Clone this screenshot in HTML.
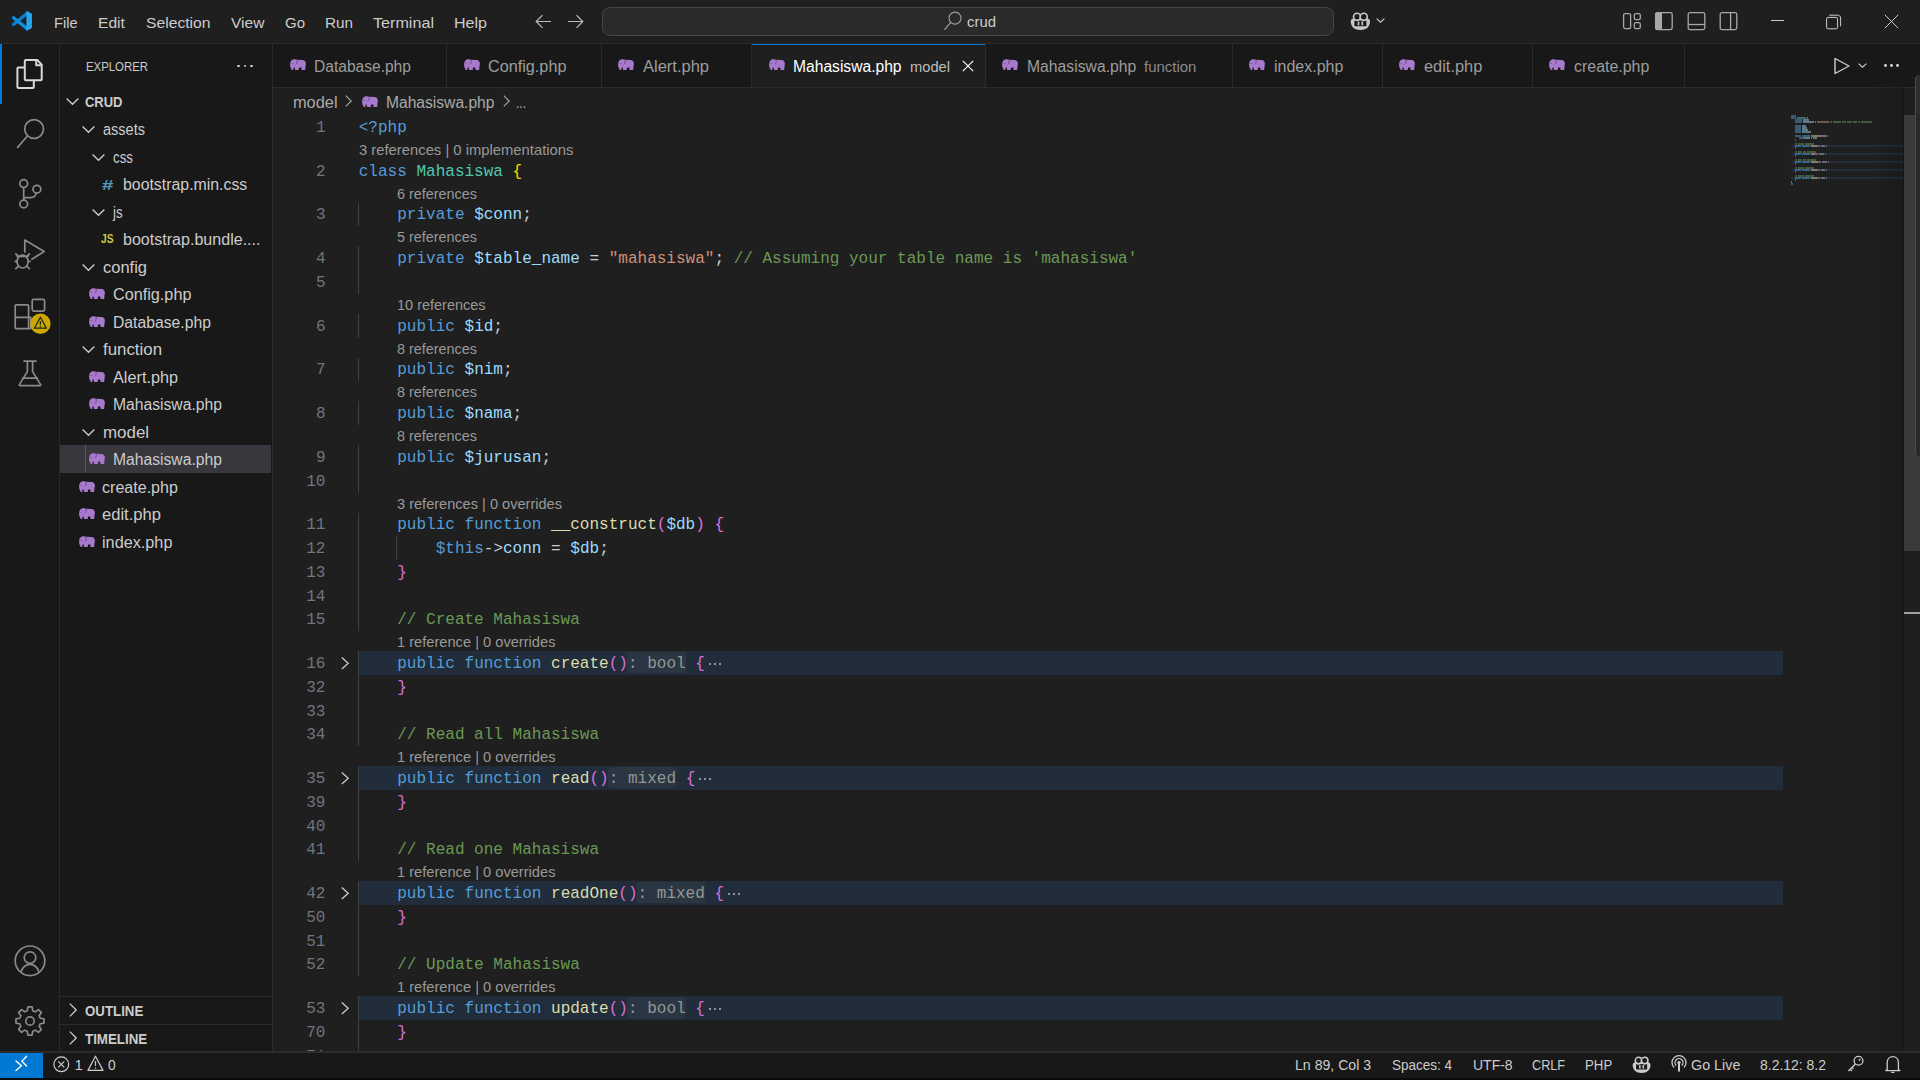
<!DOCTYPE html>
<html><head><meta charset="utf-8"><style>
html,body{margin:0;padding:0;width:1920px;height:1080px;overflow:hidden;background:#1f1f1f}
body{position:relative;font-family:"Liberation Sans",sans-serif}
.t{position:absolute;white-space:pre;font-family:"Liberation Sans",sans-serif}
.m{position:absolute;white-space:pre;font-family:"Liberation Mono",monospace;font-size:16.03px;line-height:23.75px;letter-spacing:0}
svg{overflow:visible}
</style></head><body>
<div style="position:absolute;left:0px;top:0px;width:1920px;height:43px;background:#1f1f1f;"></div>
<div style="position:absolute;left:0px;top:43px;width:1920px;height:1px;background:#2b2b2b;"></div>
<div style="position:absolute;left:0px;top:44px;width:59px;height:1007px;background:#181818;"></div>
<div style="position:absolute;left:59px;top:44px;width:1px;height:1007px;background:#2b2b2b;"></div>
<div style="position:absolute;left:60px;top:44px;width:212px;height:1007px;background:#181818;"></div>
<div style="position:absolute;left:272px;top:44px;width:1px;height:1007px;background:#2b2b2b;"></div>
<div style="position:absolute;left:273px;top:44px;width:1647px;height:43px;background:#181818;"></div>
<div style="position:absolute;left:273px;top:87px;width:1647px;height:964px;background:#1f1f1f;"></div>
<div style="position:absolute;left:273px;top:86.5px;width:1647px;height:1.25px;background:#2b2b2b;"></div>
<div style="position:absolute;left:0px;top:1051px;width:1920px;height:1px;background:#2b2b2b;"></div>
<div style="position:absolute;left:0px;top:1052px;width:1920px;height:28px;background:#181818;"></div>
<svg style="position:absolute;left:0;top:0" width="40" height="40" viewBox="0 0 40 40"><path d="M27.2 13.2 L13.5 24.5" stroke="#0a7fd2" stroke-width="3.3" stroke-linecap="round"/><path d="M27.2 28.6 L13.5 17.7" stroke="#0d8de0" stroke-width="3.3" stroke-linecap="round"/><path d="M26.4 10.8 L31.9 13.8 L31.9 27.9 L26.4 31.1 Z" fill="#27a6ee"/></svg>
<div class="t" style="left:54.00px;top:13.05px;font-size:15.5px;line-height:20.15px;color:#cccccc;transform:scaleX(0.9417);transform-origin:0 0;">File</div>
<div class="t" style="left:98.00px;top:13.05px;font-size:15.5px;line-height:20.15px;color:#cccccc;transform:scaleX(1.0069);transform-origin:0 0;">Edit</div>
<div class="t" style="left:145.50px;top:13.05px;font-size:15.5px;line-height:20.15px;color:#cccccc;transform:scaleX(1.0125);transform-origin:0 0;">Selection</div>
<div class="t" style="left:230.50px;top:13.05px;font-size:15.5px;line-height:20.15px;color:#cccccc;transform:scaleX(1.0006);transform-origin:0 0;">View</div>
<div class="t" style="left:285.00px;top:13.05px;font-size:15.5px;line-height:20.15px;color:#cccccc;transform:scaleX(0.9702);transform-origin:0 0;">Go</div>
<div class="t" style="left:325.00px;top:13.05px;font-size:15.5px;line-height:20.15px;color:#cccccc;transform:scaleX(0.9871);transform-origin:0 0;">Run</div>
<div class="t" style="left:373.00px;top:13.05px;font-size:15.5px;line-height:20.15px;color:#cccccc;transform:scaleX(1.0411);transform-origin:0 0;">Terminal</div>
<div class="t" style="left:454.00px;top:13.05px;font-size:15.5px;line-height:20.15px;color:#cccccc;transform:scaleX(1.0335);transform-origin:0 0;">Help</div>
<svg style="position:absolute;left:535px;top:14px" width="17" height="15" viewBox="0 0 17 15"><path d="M16 7.5 H1.2 M7.5 1.2 L1.2 7.5 L7.5 13.8" stroke="#bbbbbb" stroke-width="1.2" fill="none"/></svg>
<svg style="position:absolute;left:567px;top:14px" width="17" height="15" viewBox="0 0 17 15"><path d="M1 7.5 H15.8 M9.5 1.2 L15.8 7.5 L9.5 13.8" stroke="#bbbbbb" stroke-width="1.2" fill="none"/></svg>
<div style="position:absolute;left:602px;top:7px;width:730px;height:27px;border:1px solid #454545;border-radius:8px;background:#2a2a2a"></div>
<svg style="position:absolute;left:943px;top:12px" width="18" height="18" viewBox="0 0 18 18"><circle cx="12" cy="6.1" r="6" stroke="#a0a0a0" stroke-width="1.1" fill="none"/><path d="M7.8 10.4 L1.8 17.4" stroke="#a0a0a0" stroke-width="1.2" stroke-linecap="round"/></svg>
<div class="t" style="left:967.00px;top:12.05px;font-size:15.5px;line-height:20.15px;color:#cccccc;transform:scaleX(0.9595);transform-origin:0 0;">crud</div>
<svg style="position:absolute;left:0;top:0;overflow:visible" width="1" height="1"><g transform="translate(1350,12) scale(1.04)"><path d="M0.8 10.2 C0.3 7.6 1.8 6.2 3.6 6.2 H16.4 C18.2 6.2 19.7 7.6 19.2 10.2 C18.7 14.4 15.8 17.4 10 17.4 C4.2 17.4 1.3 14.4 0.8 10.2 Z" fill="#c8c8c8"/><rect x="4.2" y="8.2" width="11.6" height="5.6" rx="0.6" fill="#1c1c1c"/><rect x="7.4" y="9.2" width="1.6" height="3.6" fill="#c8c8c8"/><rect x="11" y="9.2" width="1.6" height="3.6" fill="#c8c8c8"/><circle cx="6.8" cy="4.6" r="3.4" fill="#1c1c1c" stroke="#c8c8c8" stroke-width="1.6"/><circle cx="13.2" cy="4.6" r="3.4" fill="#1c1c1c" stroke="#c8c8c8" stroke-width="1.6"/></g></svg>
<svg style="position:absolute;left:1376px;top:18px" width="9" height="5" viewBox="0 0 9 5"><path d="M0.6 0.6 L4.5 4.2 L8.4 0.6" stroke="#cccccc" stroke-width="1.1" fill="none"/></svg>
<svg style="position:absolute;left:1622px;top:12px" width="20" height="18" viewBox="0 0 20 18"><g fill="none" stroke="#a8a8a8" stroke-width="1.3"><rect x="1.6" y="1.6" width="7" height="15" rx="1.6"/><rect x="12.3" y="1.6" width="6" height="6" rx="1.6"/><rect x="12.3" y="10.6" width="6" height="6" rx="1.6"/></g></svg>
<svg style="position:absolute;left:1654px;top:11px" width="20" height="20" viewBox="0 0 20 20"><rect x="1.6" y="1.6" width="16.6" height="17" rx="1.8" fill="none" stroke="#a8a8a8" stroke-width="1.3"/><rect x="1.6" y="1.6" width="6.4" height="17" fill="#a8a8a8"/></svg>
<svg style="position:absolute;left:1687px;top:11px" width="20" height="20" viewBox="0 0 20 20"><rect x="1.2" y="1.6" width="16.6" height="17" rx="1.8" fill="none" stroke="#a8a8a8" stroke-width="1.3"/><path d="M1.2 13.5 H17.8" stroke="#a8a8a8" stroke-width="1.3"/></svg>
<svg style="position:absolute;left:1719px;top:11px" width="20" height="20" viewBox="0 0 20 20"><rect x="1.2" y="1.6" width="16.6" height="17" rx="1.8" fill="none" stroke="#a8a8a8" stroke-width="1.3"/><path d="M11.6 1.6 V18.6" stroke="#a8a8a8" stroke-width="1.3"/></svg>
<div style="position:absolute;left:1771px;top:20px;width:13px;height:1px;background:#cccccc;"></div>
<svg style="position:absolute;left:1826px;top:14px" width="16" height="16" viewBox="0 0 16 16"><rect x="0.6" y="3.4" width="11" height="11.4" rx="1.5" fill="none" stroke="#cccccc" stroke-width="1"/><path d="M3.2 1.2 H11.8 C13.4 1.2 14.6 2.4 14.6 4 V12.4" fill="none" stroke="#cccccc" stroke-width="1"/></svg>
<svg style="position:absolute;left:1884px;top:14px" width="15" height="15" viewBox="0 0 15 15"><path d="M0.8 0.8 L14.2 14.2 M14.2 0.8 L0.8 14.2" stroke="#cccccc" stroke-width="1"/></svg>
<div style="position:absolute;left:0px;top:44px;width:2px;height:60px;background:#0078d4;"></div>
<svg style="position:absolute;left:0;top:0" width="60" height="1080" viewBox="0 0 60 1080"><g fill="none" stroke="#d7d7d7" stroke-width="2" stroke-linejoin="round"><path d="M24.8 67.6 H18.4 Q17.4 67.6 17.4 68.6 V87 Q17.4 88 18.4 88 H32.8 Q33.8 88 33.8 87 V80.8"/><path d="M25.8 60 H37.3 L41.7 64.6 V79.3 Q41.7 80.3 40.7 80.3 H25.8 Q24.8 80.3 24.8 79.3 V61 Q24.8 60 25.8 60 Z"/><path d="M36.2 60.5 V65.2 H41.2"/></g><g fill="none" stroke="#8a8a8a" stroke-width="1.7" stroke-linejoin="round" stroke-linecap="round"><circle cx="34.1" cy="129" r="9.4"/><path d="M27.2 136.2 L17.6 147.4"/><circle cx="23.7" cy="183.6" r="3.9"/><circle cx="23.7" cy="204" r="3.9"/><circle cx="36.9" cy="189.2" r="3.9"/><path d="M23.7 187.5 V200.1"/><path d="M23.7 197.6 H30.5 C33.5 197.6 35.6 195.8 36.2 193.1"/><path d="M24.8 252 V240 L44.2 251.5 L31.8 259.2"/><ellipse cx="22.6" cy="261.6" rx="5.6" ry="6.4"/><path d="M17.2 256.5 H28 M15.8 254 L18 256 M29.4 254 L27.2 256 M15.2 261.4 H17 M28.2 261.4 H30 M15.8 268.6 L18 266.6 M29.4 268.6 L27.2 266.6"/><path d="M16.2 317.4 H30.8 V328.6 H16.2 Q15.2 328.6 15.2 327.6 V305.8 Q15.2 304.8 16.2 304.8 H27.6 Q28.6 304.8 28.6 305.8 V328.6"/><rect x="32.2" y="299.3" width="12.4" height="11.9" rx="1.6"/><path d="M24 361.2 H36 M27.4 361.4 V371.6 L19.4 384.6 Q19 385.6 20 385.6 H40 Q41 385.6 40.6 384.6 L32.6 371.6 V361.4 M22.6 378.2 H37.4"/><circle cx="30" cy="960.8" r="14.8"/><circle cx="30" cy="957.6" r="5.8"/><path d="M21.2 971.6 C22.8 966.8 26 964.4 30 964.4 C34 964.4 37.2 966.8 38.8 971.6"/><path d="M27.27 1010.76 L27.88 1006.96 L32.12 1006.96 L32.73 1010.76 L35.32 1011.83 L38.43 1009.57 L41.43 1012.57 L39.17 1015.68 L40.24 1018.27 L44.04 1018.88 L44.04 1023.12 L40.24 1023.73 L39.17 1026.32 L41.43 1029.43 L38.43 1032.43 L35.32 1030.17 L32.73 1031.24 L32.12 1035.04 L27.88 1035.04 L27.27 1031.24 L24.68 1030.17 L21.57 1032.43 L18.57 1029.43 L20.83 1026.32 L19.76 1023.73 L15.96 1023.12 L15.96 1018.88 L19.76 1018.27 L20.83 1015.68 L18.57 1012.57 L21.57 1009.57 L24.68 1011.83Z"/><circle cx="30" cy="1021" r="4.2"/></g><circle cx="40.4" cy="323.8" r="10.2" fill="#cca700"/><path d="M40.4 317.2 L46.4 328.2 H34.4 Z" fill="none" stroke="#1d2a12" stroke-width="1.3" stroke-linejoin="round"/><path d="M40.4 321.2 V324.8" stroke="#1d2a12" stroke-width="1.3"/><circle cx="40.4" cy="326.6" r="0.75" fill="#1d2a12"/></svg>
<div class="t" style="left:85.50px;top:58.04px;font-size:13.5px;line-height:17.55px;color:#cccccc;transform:scaleX(0.8427);transform-origin:0 0;">EXPLORER</div>
<div style="position:absolute;left:237.0px;top:64.5px;width:2.6px;height:2.6px;background:#cccccc;border-radius:50%;"></div>
<div style="position:absolute;left:243.5px;top:64.5px;width:2.6px;height:2.6px;background:#cccccc;border-radius:50%;"></div>
<div style="position:absolute;left:250.0px;top:64.5px;width:2.6px;height:2.6px;background:#cccccc;border-radius:50%;"></div>
<svg style="position:absolute;left:66px;top:98px" width="13" height="7" viewBox="0 0 13 7"><path d="M0.6 0.6 L6.5 6.2 L12.4 0.6" stroke="#cccccc" stroke-width="1.4" fill="none"/></svg>
<div class="t" style="left:85.00px;top:93.05px;font-size:14px;line-height:18.2px;color:#cccccc;font-weight:bold;transform:scaleX(0.9268);transform-origin:0 0;">CRUD</div>
<svg style="position:absolute;left:82px;top:126.0px" width="13" height="7" viewBox="0 0 13 7"><path d="M0.6 0.6 L6.5 6.2 L12.4 0.6" stroke="#cccccc" stroke-width="1.4" fill="none"/></svg>
<div class="t" style="left:103.00px;top:120.05px;font-size:15.6px;line-height:20.28px;color:#cccccc;transform:scaleX(0.9316);transform-origin:0 0;">assets</div>
<svg style="position:absolute;left:92px;top:153.5px" width="13" height="7" viewBox="0 0 13 7"><path d="M0.6 0.6 L6.5 6.2 L12.4 0.6" stroke="#cccccc" stroke-width="1.4" fill="none"/></svg>
<div class="t" style="left:112.80px;top:147.55px;font-size:15.6px;line-height:20.28px;color:#cccccc;transform:scaleX(0.8547);transform-origin:0 0;">css</div>
<div class="t" style="left:101.50px;top:174.65px;font-size:15px;line-height:19.5px;color:#519aba;font-weight:bold;transform:scaleX(1.3690);transform-origin:0 0;">#</div>
<div class="t" style="left:123.00px;top:175.05px;font-size:15.6px;line-height:20.28px;color:#cccccc;transform:scaleX(1.0171);transform-origin:0 0;">bootstrap.min.css</div>
<svg style="position:absolute;left:92px;top:208.5px" width="13" height="7" viewBox="0 0 13 7"><path d="M0.6 0.6 L6.5 6.2 L12.4 0.6" stroke="#cccccc" stroke-width="1.4" fill="none"/></svg>
<div class="t" style="left:113.20px;top:202.55px;font-size:15.6px;line-height:20.28px;color:#cccccc;transform:scaleX(0.8547);transform-origin:0 0;">js</div>
<div class="t" style="left:101.00px;top:231.64px;font-size:12px;line-height:15.6px;color:#cbcb41;font-weight:bold;transform:scaleX(0.8538);transform-origin:0 0;">JS</div>
<div class="t" style="left:123.00px;top:230.05px;font-size:15.6px;line-height:20.28px;color:#cccccc;transform:scaleX(1.0297);transform-origin:0 0;">bootstrap.bundle....</div>
<svg style="position:absolute;left:82px;top:263.5px" width="13" height="7" viewBox="0 0 13 7"><path d="M0.6 0.6 L6.5 6.2 L12.4 0.6" stroke="#cccccc" stroke-width="1.4" fill="none"/></svg>
<div class="t" style="left:103.00px;top:257.55px;font-size:15.6px;line-height:20.28px;color:#cccccc;transform:scaleX(1.0564);transform-origin:0 0;">config</div>
<svg style="position:absolute;left:89.0px;top:288.0px" width="16" height="11" viewBox="0 0 16 11"><path fill="#a87acd" d="M1.8 10.9 L0.5 8.4 C-0.1 6.8 0 3.4 1 2 C1.8 0.6 3.5 0 5 0.2 L7 0.8 L12.5 0.9 C14.7 1 16 2.8 15.9 5 L15.4 8 L15.2 11 L11.6 11 L11.3 8.6 L9 8.6 L8.7 11 L5.1 11 L4.7 8.7 L3.9 8.2 C3.3 9 3.2 10 3.5 10.9 Z"/><path d="M7.1 1 C7.4 2.5 7.4 4.2 5.8 5.4" stroke="#5a3f78" stroke-width="0.8" fill="none"/><circle cx="2.2" cy="4.2" r="0.55" fill="#5a3f78"/></svg>
<div class="t" style="left:112.50px;top:285.05px;font-size:15.6px;line-height:20.28px;color:#cccccc;transform:scaleX(1.0397);transform-origin:0 0;">Config.php</div>
<svg style="position:absolute;left:89.0px;top:315.5px" width="16" height="11" viewBox="0 0 16 11"><path fill="#a87acd" d="M1.8 10.9 L0.5 8.4 C-0.1 6.8 0 3.4 1 2 C1.8 0.6 3.5 0 5 0.2 L7 0.8 L12.5 0.9 C14.7 1 16 2.8 15.9 5 L15.4 8 L15.2 11 L11.6 11 L11.3 8.6 L9 8.6 L8.7 11 L5.1 11 L4.7 8.7 L3.9 8.2 C3.3 9 3.2 10 3.5 10.9 Z"/><path d="M7.1 1 C7.4 2.5 7.4 4.2 5.8 5.4" stroke="#5a3f78" stroke-width="0.8" fill="none"/><circle cx="2.2" cy="4.2" r="0.55" fill="#5a3f78"/></svg>
<div class="t" style="left:112.50px;top:312.55px;font-size:15.6px;line-height:20.28px;color:#cccccc;transform:scaleX(1.0084);transform-origin:0 0;">Database.php</div>
<svg style="position:absolute;left:82px;top:346.0px" width="13" height="7" viewBox="0 0 13 7"><path d="M0.6 0.6 L6.5 6.2 L12.4 0.6" stroke="#cccccc" stroke-width="1.4" fill="none"/></svg>
<div class="t" style="left:103.00px;top:340.05px;font-size:15.6px;line-height:20.28px;color:#cccccc;transform:scaleX(1.0806);transform-origin:0 0;">function</div>
<svg style="position:absolute;left:89.0px;top:370.5px" width="16" height="11" viewBox="0 0 16 11"><path fill="#a87acd" d="M1.8 10.9 L0.5 8.4 C-0.1 6.8 0 3.4 1 2 C1.8 0.6 3.5 0 5 0.2 L7 0.8 L12.5 0.9 C14.7 1 16 2.8 15.9 5 L15.4 8 L15.2 11 L11.6 11 L11.3 8.6 L9 8.6 L8.7 11 L5.1 11 L4.7 8.7 L3.9 8.2 C3.3 9 3.2 10 3.5 10.9 Z"/><path d="M7.1 1 C7.4 2.5 7.4 4.2 5.8 5.4" stroke="#5a3f78" stroke-width="0.8" fill="none"/><circle cx="2.2" cy="4.2" r="0.55" fill="#5a3f78"/></svg>
<div class="t" style="left:112.50px;top:367.55px;font-size:15.6px;line-height:20.28px;color:#cccccc;transform:scaleX(1.0417);transform-origin:0 0;">Alert.php</div>
<svg style="position:absolute;left:89.0px;top:398.0px" width="16" height="11" viewBox="0 0 16 11"><path fill="#a87acd" d="M1.8 10.9 L0.5 8.4 C-0.1 6.8 0 3.4 1 2 C1.8 0.6 3.5 0 5 0.2 L7 0.8 L12.5 0.9 C14.7 1 16 2.8 15.9 5 L15.4 8 L15.2 11 L11.6 11 L11.3 8.6 L9 8.6 L8.7 11 L5.1 11 L4.7 8.7 L3.9 8.2 C3.3 9 3.2 10 3.5 10.9 Z"/><path d="M7.1 1 C7.4 2.5 7.4 4.2 5.8 5.4" stroke="#5a3f78" stroke-width="0.8" fill="none"/><circle cx="2.2" cy="4.2" r="0.55" fill="#5a3f78"/></svg>
<div class="t" style="left:112.50px;top:395.05px;font-size:15.6px;line-height:20.28px;color:#cccccc;transform:scaleX(1.0053);transform-origin:0 0;">Mahasiswa.php</div>
<svg style="position:absolute;left:82px;top:428.5px" width="13" height="7" viewBox="0 0 13 7"><path d="M0.6 0.6 L6.5 6.2 L12.4 0.6" stroke="#cccccc" stroke-width="1.4" fill="none"/></svg>
<div class="t" style="left:103.00px;top:422.55px;font-size:15.6px;line-height:20.28px;color:#cccccc;transform:scaleX(1.0841);transform-origin:0 0;">model</div>
<div style="position:absolute;left:60px;top:445.25px;width:211px;height:27.5px;background:#37373d;"></div>
<div style="position:absolute;left:85px;top:445.25px;width:1px;height:27.5px;background:#585858;"></div>
<svg style="position:absolute;left:89.0px;top:453.0px" width="16" height="11" viewBox="0 0 16 11"><path fill="#a87acd" d="M1.8 10.9 L0.5 8.4 C-0.1 6.8 0 3.4 1 2 C1.8 0.6 3.5 0 5 0.2 L7 0.8 L12.5 0.9 C14.7 1 16 2.8 15.9 5 L15.4 8 L15.2 11 L11.6 11 L11.3 8.6 L9 8.6 L8.7 11 L5.1 11 L4.7 8.7 L3.9 8.2 C3.3 9 3.2 10 3.5 10.9 Z"/><path d="M7.1 1 C7.4 2.5 7.4 4.2 5.8 5.4" stroke="#5a3f78" stroke-width="0.8" fill="none"/><circle cx="2.2" cy="4.2" r="0.55" fill="#5a3f78"/></svg>
<div class="t" style="left:112.50px;top:450.05px;font-size:15.6px;line-height:20.28px;color:#cccccc;transform:scaleX(1.0053);transform-origin:0 0;">Mahasiswa.php</div>
<svg style="position:absolute;left:78.9px;top:480.5px" width="16" height="11" viewBox="0 0 16 11"><path fill="#a87acd" d="M1.8 10.9 L0.5 8.4 C-0.1 6.8 0 3.4 1 2 C1.8 0.6 3.5 0 5 0.2 L7 0.8 L12.5 0.9 C14.7 1 16 2.8 15.9 5 L15.4 8 L15.2 11 L11.6 11 L11.3 8.6 L9 8.6 L8.7 11 L5.1 11 L4.7 8.7 L3.9 8.2 C3.3 9 3.2 10 3.5 10.9 Z"/><path d="M7.1 1 C7.4 2.5 7.4 4.2 5.8 5.4" stroke="#5a3f78" stroke-width="0.8" fill="none"/><circle cx="2.2" cy="4.2" r="0.55" fill="#5a3f78"/></svg>
<div class="t" style="left:102.40px;top:477.55px;font-size:15.6px;line-height:20.28px;color:#cccccc;transform:scaleX(1.0300);transform-origin:0 0;">create.php</div>
<svg style="position:absolute;left:78.9px;top:508.0px" width="16" height="11" viewBox="0 0 16 11"><path fill="#a87acd" d="M1.8 10.9 L0.5 8.4 C-0.1 6.8 0 3.4 1 2 C1.8 0.6 3.5 0 5 0.2 L7 0.8 L12.5 0.9 C14.7 1 16 2.8 15.9 5 L15.4 8 L15.2 11 L11.6 11 L11.3 8.6 L9 8.6 L8.7 11 L5.1 11 L4.7 8.7 L3.9 8.2 C3.3 9 3.2 10 3.5 10.9 Z"/><path d="M7.1 1 C7.4 2.5 7.4 4.2 5.8 5.4" stroke="#5a3f78" stroke-width="0.8" fill="none"/><circle cx="2.2" cy="4.2" r="0.55" fill="#5a3f78"/></svg>
<div class="t" style="left:102.40px;top:505.05px;font-size:15.6px;line-height:20.28px;color:#cccccc;transform:scaleX(1.0624);transform-origin:0 0;">edit.php</div>
<svg style="position:absolute;left:78.9px;top:535.5px" width="16" height="11" viewBox="0 0 16 11"><path fill="#a87acd" d="M1.8 10.9 L0.5 8.4 C-0.1 6.8 0 3.4 1 2 C1.8 0.6 3.5 0 5 0.2 L7 0.8 L12.5 0.9 C14.7 1 16 2.8 15.9 5 L15.4 8 L15.2 11 L11.6 11 L11.3 8.6 L9 8.6 L8.7 11 L5.1 11 L4.7 8.7 L3.9 8.2 C3.3 9 3.2 10 3.5 10.9 Z"/><path d="M7.1 1 C7.4 2.5 7.4 4.2 5.8 5.4" stroke="#5a3f78" stroke-width="0.8" fill="none"/><circle cx="2.2" cy="4.2" r="0.55" fill="#5a3f78"/></svg>
<div class="t" style="left:102.40px;top:532.55px;font-size:15.6px;line-height:20.28px;color:#cccccc;transform:scaleX(1.0413);transform-origin:0 0;">index.php</div>
<div style="position:absolute;left:60px;top:996px;width:212px;height:1px;background:#2b2b2b;"></div>
<div style="position:absolute;left:60px;top:1024px;width:212px;height:1px;background:#2b2b2b;"></div>
<svg style="position:absolute;left:69px;top:1003px" width="8" height="14" viewBox="0 0 8 14"><path d="M0.8 0.6 L7.2 7.0 L0.8 13.4" stroke="#cccccc" stroke-width="1.3" fill="none"/></svg>
<div class="t" style="left:85.00px;top:1002.15px;font-size:14px;line-height:18.2px;color:#cccccc;font-weight:bold;transform:scaleX(0.9486);transform-origin:0 0;">OUTLINE</div>
<svg style="position:absolute;left:69px;top:1031px" width="8" height="14" viewBox="0 0 8 14"><path d="M0.8 0.6 L7.2 7.0 L0.8 13.4" stroke="#cccccc" stroke-width="1.3" fill="none"/></svg>
<div class="t" style="left:85.00px;top:1029.85px;font-size:14px;line-height:18.2px;color:#cccccc;font-weight:bold;transform:scaleX(0.9529);transform-origin:0 0;">TIMELINE</div>
<div style="position:absolute;left:446.1px;top:44px;width:1px;height:42.5px;background:#2b2b2b;"></div>
<svg style="position:absolute;left:289.5px;top:59px" width="16" height="11" viewBox="0 0 16 11"><path fill="#a87acd" d="M1.8 10.9 L0.5 8.4 C-0.1 6.8 0 3.4 1 2 C1.8 0.6 3.5 0 5 0.2 L7 0.8 L12.5 0.9 C14.7 1 16 2.8 15.9 5 L15.4 8 L15.2 11 L11.6 11 L11.3 8.6 L9 8.6 L8.7 11 L5.1 11 L4.7 8.7 L3.9 8.2 C3.3 9 3.2 10 3.5 10.9 Z"/><path d="M7.1 1 C7.4 2.5 7.4 4.2 5.8 5.4" stroke="#5a3f78" stroke-width="0.8" fill="none"/><circle cx="2.2" cy="4.2" r="0.55" fill="#5a3f78"/></svg>
<div class="t" style="left:313.70px;top:56.75px;font-size:15.6px;line-height:20.28px;color:#9d9d9d;transform:scaleX(0.9981);transform-origin:0 0;">Database.php</div>
<div style="position:absolute;left:600.9px;top:44px;width:1px;height:42.5px;background:#2b2b2b;"></div>
<svg style="position:absolute;left:463.6px;top:59px" width="16" height="11" viewBox="0 0 16 11"><path fill="#a87acd" d="M1.8 10.9 L0.5 8.4 C-0.1 6.8 0 3.4 1 2 C1.8 0.6 3.5 0 5 0.2 L7 0.8 L12.5 0.9 C14.7 1 16 2.8 15.9 5 L15.4 8 L15.2 11 L11.6 11 L11.3 8.6 L9 8.6 L8.7 11 L5.1 11 L4.7 8.7 L3.9 8.2 C3.3 9 3.2 10 3.5 10.9 Z"/><path d="M7.1 1 C7.4 2.5 7.4 4.2 5.8 5.4" stroke="#5a3f78" stroke-width="0.8" fill="none"/><circle cx="2.2" cy="4.2" r="0.55" fill="#5a3f78"/></svg>
<div class="t" style="left:487.80px;top:56.75px;font-size:15.6px;line-height:20.28px;color:#9d9d9d;transform:scaleX(1.0397);transform-origin:0 0;">Config.php</div>
<div style="position:absolute;left:751.2px;top:44px;width:1px;height:42.5px;background:#2b2b2b;"></div>
<svg style="position:absolute;left:618.4px;top:59px" width="16" height="11" viewBox="0 0 16 11"><path fill="#a87acd" d="M1.8 10.9 L0.5 8.4 C-0.1 6.8 0 3.4 1 2 C1.8 0.6 3.5 0 5 0.2 L7 0.8 L12.5 0.9 C14.7 1 16 2.8 15.9 5 L15.4 8 L15.2 11 L11.6 11 L11.3 8.6 L9 8.6 L8.7 11 L5.1 11 L4.7 8.7 L3.9 8.2 C3.3 9 3.2 10 3.5 10.9 Z"/><path d="M7.1 1 C7.4 2.5 7.4 4.2 5.8 5.4" stroke="#5a3f78" stroke-width="0.8" fill="none"/><circle cx="2.2" cy="4.2" r="0.55" fill="#5a3f78"/></svg>
<div class="t" style="left:642.60px;top:56.75px;font-size:15.6px;line-height:20.28px;color:#9d9d9d;transform:scaleX(1.0577);transform-origin:0 0;">Alert.php</div>
<div style="position:absolute;left:752.2px;top:44px;width:233.0999999999999px;height:43px;background:#1f1f1f;"></div>
<div style="position:absolute;left:751.7px;top:44px;width:233.5999999999999px;height:1.25px;background:#0078d4;"></div>
<div style="position:absolute;left:984.8px;top:44px;width:1px;height:42.5px;background:#2b2b2b;"></div>
<svg style="position:absolute;left:768.7px;top:59px" width="16" height="11" viewBox="0 0 16 11"><path fill="#a87acd" d="M1.8 10.9 L0.5 8.4 C-0.1 6.8 0 3.4 1 2 C1.8 0.6 3.5 0 5 0.2 L7 0.8 L12.5 0.9 C14.7 1 16 2.8 15.9 5 L15.4 8 L15.2 11 L11.6 11 L11.3 8.6 L9 8.6 L8.7 11 L5.1 11 L4.7 8.7 L3.9 8.2 C3.3 9 3.2 10 3.5 10.9 Z"/><path d="M7.1 1 C7.4 2.5 7.4 4.2 5.8 5.4" stroke="#5a3f78" stroke-width="0.8" fill="none"/><circle cx="2.2" cy="4.2" r="0.55" fill="#5a3f78"/></svg>
<div class="t" style="left:792.90px;top:56.75px;font-size:15.6px;line-height:20.28px;color:#ffffff;transform:scaleX(1.0017);transform-origin:0 0;">Mahasiswa.php</div>
<div class="t" style="left:909.70px;top:58.15px;font-size:14.2px;line-height:18.46px;color:#bdbdbd;transform:scaleX(1.0356);transform-origin:0 0;">model</div>
<svg style="position:absolute;left:962px;top:60px" width="12" height="12" viewBox="0 0 12 12"><path d="M0.8 0.8 L11.2 11.2 M11.2 0.8 L0.8 11.2" stroke="#ffffff" stroke-width="1.2"/></svg>
<div style="position:absolute;left:1231.9px;top:44px;width:1px;height:42.5px;background:#2b2b2b;"></div>
<svg style="position:absolute;left:1002.3px;top:59px" width="16" height="11" viewBox="0 0 16 11"><path fill="#a87acd" d="M1.8 10.9 L0.5 8.4 C-0.1 6.8 0 3.4 1 2 C1.8 0.6 3.5 0 5 0.2 L7 0.8 L12.5 0.9 C14.7 1 16 2.8 15.9 5 L15.4 8 L15.2 11 L11.6 11 L11.3 8.6 L9 8.6 L8.7 11 L5.1 11 L4.7 8.7 L3.9 8.2 C3.3 9 3.2 10 3.5 10.9 Z"/><path d="M7.1 1 C7.4 2.5 7.4 4.2 5.8 5.4" stroke="#5a3f78" stroke-width="0.8" fill="none"/><circle cx="2.2" cy="4.2" r="0.55" fill="#5a3f78"/></svg>
<div class="t" style="left:1026.50px;top:56.75px;font-size:15.6px;line-height:20.28px;color:#9d9d9d;transform:scaleX(1.0081);transform-origin:0 0;">Mahasiswa.php</div>
<div class="t" style="left:1143.60px;top:58.15px;font-size:14.2px;line-height:18.46px;color:#8a8a8a;transform:scaleX(1.0543);transform-origin:0 0;">function</div>
<div style="position:absolute;left:1381.8px;top:44px;width:1px;height:42.5px;background:#2b2b2b;"></div>
<svg style="position:absolute;left:1249.4px;top:59px" width="16" height="11" viewBox="0 0 16 11"><path fill="#a87acd" d="M1.8 10.9 L0.5 8.4 C-0.1 6.8 0 3.4 1 2 C1.8 0.6 3.5 0 5 0.2 L7 0.8 L12.5 0.9 C14.7 1 16 2.8 15.9 5 L15.4 8 L15.2 11 L11.6 11 L11.3 8.6 L9 8.6 L8.7 11 L5.1 11 L4.7 8.7 L3.9 8.2 C3.3 9 3.2 10 3.5 10.9 Z"/><path d="M7.1 1 C7.4 2.5 7.4 4.2 5.8 5.4" stroke="#5a3f78" stroke-width="0.8" fill="none"/><circle cx="2.2" cy="4.2" r="0.55" fill="#5a3f78"/></svg>
<div class="t" style="left:1273.60px;top:56.75px;font-size:15.6px;line-height:20.28px;color:#9d9d9d;transform:scaleX(1.0265);transform-origin:0 0;">index.php</div>
<div style="position:absolute;left:1531.8px;top:44px;width:1px;height:42.5px;background:#2b2b2b;"></div>
<svg style="position:absolute;left:1399.3px;top:59px" width="16" height="11" viewBox="0 0 16 11"><path fill="#a87acd" d="M1.8 10.9 L0.5 8.4 C-0.1 6.8 0 3.4 1 2 C1.8 0.6 3.5 0 5 0.2 L7 0.8 L12.5 0.9 C14.7 1 16 2.8 15.9 5 L15.4 8 L15.2 11 L11.6 11 L11.3 8.6 L9 8.6 L8.7 11 L5.1 11 L4.7 8.7 L3.9 8.2 C3.3 9 3.2 10 3.5 10.9 Z"/><path d="M7.1 1 C7.4 2.5 7.4 4.2 5.8 5.4" stroke="#5a3f78" stroke-width="0.8" fill="none"/><circle cx="2.2" cy="4.2" r="0.55" fill="#5a3f78"/></svg>
<div class="t" style="left:1423.50px;top:56.75px;font-size:15.6px;line-height:20.28px;color:#9d9d9d;transform:scaleX(1.0498);transform-origin:0 0;">edit.php</div>
<div style="position:absolute;left:1683.6px;top:44px;width:1px;height:42.5px;background:#2b2b2b;"></div>
<svg style="position:absolute;left:1549.3px;top:59px" width="16" height="11" viewBox="0 0 16 11"><path fill="#a87acd" d="M1.8 10.9 L0.5 8.4 C-0.1 6.8 0 3.4 1 2 C1.8 0.6 3.5 0 5 0.2 L7 0.8 L12.5 0.9 C14.7 1 16 2.8 15.9 5 L15.4 8 L15.2 11 L11.6 11 L11.3 8.6 L9 8.6 L8.7 11 L5.1 11 L4.7 8.7 L3.9 8.2 C3.3 9 3.2 10 3.5 10.9 Z"/><path d="M7.1 1 C7.4 2.5 7.4 4.2 5.8 5.4" stroke="#5a3f78" stroke-width="0.8" fill="none"/><circle cx="2.2" cy="4.2" r="0.55" fill="#5a3f78"/></svg>
<div class="t" style="left:1573.50px;top:56.75px;font-size:15.6px;line-height:20.28px;color:#9d9d9d;transform:scaleX(1.0218);transform-origin:0 0;">create.php</div>
<svg style="position:absolute;left:1833px;top:57px" width="18" height="18" viewBox="0 0 18 18"><path d="M2 1.5 L16 9 L2 16.5 Z" fill="none" stroke="#cccccc" stroke-width="1.4" stroke-linejoin="round"/></svg>
<svg style="position:absolute;left:1858px;top:63px" width="9" height="5" viewBox="0 0 9 5"><path d="M0.6 0.6 L4.5 4.2 L8.4 0.6" stroke="#cccccc" stroke-width="1.1" fill="none"/></svg>
<div style="position:absolute;left:1884.0px;top:64.3px;width:2.8px;height:2.8px;background:#cccccc;border-radius:50%;"></div>
<div style="position:absolute;left:1890.2px;top:64.3px;width:2.8px;height:2.8px;background:#cccccc;border-radius:50%;"></div>
<div style="position:absolute;left:1896.4px;top:64.3px;width:2.8px;height:2.8px;background:#cccccc;border-radius:50%;"></div>
<div class="t" style="left:293.00px;top:93.25px;font-size:15.6px;line-height:20.28px;color:#a9a9a9;transform:scaleX(1.0487);transform-origin:0 0;">model</div>
<svg style="position:absolute;left:345px;top:95px" width="7" height="12" viewBox="0 0 7 12"><path d="M0.8 0.6 L6.2 6.0 L0.8 11.4" stroke="#a9a9a9" stroke-width="1.1" fill="none"/></svg>
<svg style="position:absolute;left:362px;top:96px" width="16" height="11" viewBox="0 0 16 11"><path fill="#a87acd" d="M1.8 10.9 L0.5 8.4 C-0.1 6.8 0 3.4 1 2 C1.8 0.6 3.5 0 5 0.2 L7 0.8 L12.5 0.9 C14.7 1 16 2.8 15.9 5 L15.4 8 L15.2 11 L11.6 11 L11.3 8.6 L9 8.6 L8.7 11 L5.1 11 L4.7 8.7 L3.9 8.2 C3.3 9 3.2 10 3.5 10.9 Z"/><path d="M7.1 1 C7.4 2.5 7.4 4.2 5.8 5.4" stroke="#5a3f78" stroke-width="0.8" fill="none"/><circle cx="2.2" cy="4.2" r="0.55" fill="#5a3f78"/></svg>
<div class="t" style="left:386.00px;top:93.25px;font-size:15.6px;line-height:20.28px;color:#a9a9a9;transform:scaleX(1.0007);transform-origin:0 0;">Mahasiswa.php</div>
<svg style="position:absolute;left:503px;top:95px" width="7" height="12" viewBox="0 0 7 12"><path d="M0.8 0.6 L6.2 6.0 L0.8 11.4" stroke="#a9a9a9" stroke-width="1.1" fill="none"/></svg>
<div class="t" style="left:516.00px;top:93.25px;font-size:15.6px;line-height:20.28px;color:#a9a9a9;transform:scaleX(0.7723);transform-origin:0 0;">...</div>
<div style="position:absolute;left:0;top:0;width:1920px;height:1051.25px;overflow:hidden">
<div class="m" style="left:315.88px;top:116.86px;color:#6e7681">1</div>
<div class="m" style="left:358.75px;top:116.86px"><span style="color:#569cd6">&lt;?php</span></div>
<div class="t" style="left:358.75px;top:140.75px;font-size:14.8px;line-height:19.24px;color:#999999;transform:scaleX(1.0002);transform-origin:0 0;">3 references | 0 implementations</div>
<div class="m" style="left:315.88px;top:160.61px;color:#6e7681">2</div>
<div class="m" style="left:358.75px;top:160.61px"><span style="color:#569cd6">class</span><span style="color:#cccccc"> </span><span style="color:#4ec9b0">Mahasiswa</span><span style="color:#cccccc"> </span><span style="color:#ffd700">{</span></div>
<div class="t" style="left:397.23px;top:184.50px;font-size:14.8px;line-height:19.24px;color:#999999;transform:scaleX(0.9722);transform-origin:0 0;">6 references</div>
<div class="m" style="left:315.88px;top:204.36px;color:#6e7681">3</div>
<div style="position:absolute;left:358px;top:202.5px;width:1px;height:23.75px;background:#404040;"></div>
<div class="m" style="left:397.23px;top:204.36px"><span style="color:#569cd6">private</span><span style="color:#cccccc"> </span><span style="color:#9cdcfe">$conn</span><span style="color:#cccccc">;</span></div>
<div class="t" style="left:397.23px;top:228.25px;font-size:14.8px;line-height:19.24px;color:#999999;transform:scaleX(0.9722);transform-origin:0 0;">5 references</div>
<div class="m" style="left:315.88px;top:248.11px;color:#6e7681">4</div>
<div style="position:absolute;left:358px;top:246.25px;width:1px;height:23.75px;background:#404040;"></div>
<div class="m" style="left:397.23px;top:248.11px"><span style="color:#569cd6">private</span><span style="color:#cccccc"> </span><span style="color:#9cdcfe">$table_name</span><span style="color:#cccccc"> = </span><span style="color:#ce9178">"mahasiswa"</span><span style="color:#cccccc">; </span><span style="color:#6a9955">// Assuming your table name is 'mahasiswa'</span></div>
<div class="m" style="left:315.88px;top:271.86px;color:#6e7681">5</div>
<div style="position:absolute;left:358px;top:270.0px;width:1px;height:23.75px;background:#404040;"></div>
<div class="m" style="left:397.23px;top:271.86px"></div>
<div class="t" style="left:397.23px;top:295.75px;font-size:14.8px;line-height:19.24px;color:#999999;transform:scaleX(0.9787);transform-origin:0 0;">10 references</div>
<div class="m" style="left:315.88px;top:315.61px;color:#6e7681">6</div>
<div style="position:absolute;left:358px;top:313.75px;width:1px;height:23.75px;background:#404040;"></div>
<div class="m" style="left:397.23px;top:315.61px"><span style="color:#569cd6">public</span><span style="color:#cccccc"> </span><span style="color:#9cdcfe">$id</span><span style="color:#cccccc">;</span></div>
<div class="t" style="left:397.23px;top:339.50px;font-size:14.8px;line-height:19.24px;color:#999999;transform:scaleX(0.9722);transform-origin:0 0;">8 references</div>
<div class="m" style="left:315.88px;top:359.36px;color:#6e7681">7</div>
<div style="position:absolute;left:358px;top:357.5px;width:1px;height:23.75px;background:#404040;"></div>
<div class="m" style="left:397.23px;top:359.36px"><span style="color:#569cd6">public</span><span style="color:#cccccc"> </span><span style="color:#9cdcfe">$nim</span><span style="color:#cccccc">;</span></div>
<div class="t" style="left:397.23px;top:383.25px;font-size:14.8px;line-height:19.24px;color:#999999;transform:scaleX(0.9722);transform-origin:0 0;">8 references</div>
<div class="m" style="left:315.88px;top:403.11px;color:#6e7681">8</div>
<div style="position:absolute;left:358px;top:401.25px;width:1px;height:23.75px;background:#404040;"></div>
<div class="m" style="left:397.23px;top:403.11px"><span style="color:#569cd6">public</span><span style="color:#cccccc"> </span><span style="color:#9cdcfe">$nama</span><span style="color:#cccccc">;</span></div>
<div class="t" style="left:397.23px;top:427.00px;font-size:14.8px;line-height:19.24px;color:#999999;transform:scaleX(0.9722);transform-origin:0 0;">8 references</div>
<div class="m" style="left:315.88px;top:446.86px;color:#6e7681">9</div>
<div style="position:absolute;left:358px;top:445.0px;width:1px;height:23.75px;background:#404040;"></div>
<div class="m" style="left:397.23px;top:446.86px"><span style="color:#569cd6">public</span><span style="color:#cccccc"> </span><span style="color:#9cdcfe">$jurusan</span><span style="color:#cccccc">;</span></div>
<div class="m" style="left:306.26px;top:470.61px;color:#6e7681">10</div>
<div style="position:absolute;left:358px;top:468.75px;width:1px;height:23.75px;background:#404040;"></div>
<div class="m" style="left:397.23px;top:470.61px"></div>
<div class="t" style="left:397.23px;top:494.50px;font-size:14.8px;line-height:19.24px;color:#999999;transform:scaleX(0.9849);transform-origin:0 0;">3 references | 0 overrides</div>
<div class="m" style="left:306.26px;top:514.36px;color:#6e7681">11</div>
<div style="position:absolute;left:358px;top:512.5px;width:1px;height:23.75px;background:#404040;"></div>
<div class="m" style="left:397.23px;top:514.36px"><span style="color:#569cd6">public</span><span style="color:#cccccc"> </span><span style="color:#569cd6">function</span><span style="color:#cccccc"> </span><span style="color:#dcdcaa">__construct</span><span style="color:#da70d6">(</span><span style="color:#9cdcfe">$db</span><span style="color:#da70d6">)</span><span style="color:#cccccc"> </span><span style="color:#da70d6">{</span></div>
<div class="m" style="left:306.26px;top:538.11px;color:#6e7681">12</div>
<div style="position:absolute;left:358px;top:536.25px;width:1px;height:23.75px;background:#404040;"></div>
<div style="position:absolute;left:396px;top:536.25px;width:1px;height:23.75px;background:#404040;"></div>
<div class="m" style="left:435.71px;top:538.11px"><span style="color:#569cd6">$this</span><span style="color:#cccccc">-&gt;</span><span style="color:#9cdcfe">conn</span><span style="color:#cccccc"> = </span><span style="color:#9cdcfe">$db</span><span style="color:#cccccc">;</span></div>
<div class="m" style="left:306.26px;top:561.86px;color:#6e7681">13</div>
<div style="position:absolute;left:358px;top:560.0px;width:1px;height:23.75px;background:#404040;"></div>
<div class="m" style="left:397.23px;top:561.86px"><span style="color:#da70d6">}</span></div>
<div class="m" style="left:306.26px;top:585.61px;color:#6e7681">14</div>
<div style="position:absolute;left:358px;top:583.75px;width:1px;height:23.75px;background:#404040;"></div>
<div class="m" style="left:397.23px;top:585.61px"></div>
<div class="m" style="left:306.26px;top:609.36px;color:#6e7681">15</div>
<div style="position:absolute;left:358px;top:607.5px;width:1px;height:23.75px;background:#404040;"></div>
<div class="m" style="left:397.23px;top:609.36px"><span style="color:#6a9955">// Create Mahasiswa</span></div>
<div class="t" style="left:397.23px;top:633.25px;font-size:14.8px;line-height:19.24px;color:#999999;transform:scaleX(0.9898);transform-origin:0 0;">1 reference | 0 overrides</div>
<div class="m" style="left:306.26px;top:653.11px;color:#6e7681">16</div>
<div style="position:absolute;left:358px;top:651.25px;width:1px;height:23.75px;background:#404040;"></div>
<div style="position:absolute;left:358.75px;top:651.25px;width:1424.25px;height:23.75px;background:#212d3a;"></div>
<svg style="position:absolute;left:341px;top:656.95px" width="8" height="12.6" viewBox="0 0 8 12.6"><path d="M0.8 0.6 L7.2 6.3 L0.8 12.0" stroke="#cccccc" stroke-width="1.3" fill="none"/></svg>
<div style="position:absolute;left:627.1099999999999px;top:652.25px;width:58.72px;height:20.25px;background:rgba(255,255,255,0.045);border-radius:3px;"></div>
<div style="position:absolute;left:708.67px;top:662.85px;width:2px;height:2px;background:#b8b8b8;border-radius:50%;"></div>
<div style="position:absolute;left:713.87px;top:662.85px;width:2px;height:2px;background:#b8b8b8;border-radius:50%;"></div>
<div style="position:absolute;left:719.0699999999999px;top:662.85px;width:2px;height:2px;background:#b8b8b8;border-radius:50%;"></div>
<div class="m" style="left:397.23px;top:653.11px"><span style="color:#569cd6">public</span><span style="color:#cccccc"> </span><span style="color:#569cd6">function</span><span style="color:#cccccc"> </span><span style="color:#dcdcaa">create</span><span style="color:#da70d6">()</span><span style="color:#969696">: bool</span><span style="color:#cccccc"> </span><span style="color:#da70d6">{</span></div>
<div class="m" style="left:306.26px;top:676.86px;color:#6e7681">32</div>
<div style="position:absolute;left:358px;top:675.0px;width:1px;height:23.75px;background:#404040;"></div>
<div class="m" style="left:397.23px;top:676.86px"><span style="color:#da70d6">}</span></div>
<div class="m" style="left:306.26px;top:700.61px;color:#6e7681">33</div>
<div style="position:absolute;left:358px;top:698.75px;width:1px;height:23.75px;background:#404040;"></div>
<div class="m" style="left:397.23px;top:700.61px"></div>
<div class="m" style="left:306.26px;top:724.36px;color:#6e7681">34</div>
<div style="position:absolute;left:358px;top:722.5px;width:1px;height:23.75px;background:#404040;"></div>
<div class="m" style="left:397.23px;top:724.36px"><span style="color:#6a9955">// Read all Mahasiswa</span></div>
<div class="t" style="left:397.23px;top:748.25px;font-size:14.8px;line-height:19.24px;color:#999999;transform:scaleX(0.9898);transform-origin:0 0;">1 reference | 0 overrides</div>
<div class="m" style="left:306.26px;top:768.11px;color:#6e7681">35</div>
<div style="position:absolute;left:358px;top:766.25px;width:1px;height:23.75px;background:#404040;"></div>
<div style="position:absolute;left:358.75px;top:766.25px;width:1424.25px;height:23.75px;background:#212d3a;"></div>
<svg style="position:absolute;left:341px;top:771.95px" width="8" height="12.6" viewBox="0 0 8 12.6"><path d="M0.8 0.6 L7.2 6.3 L0.8 12.0" stroke="#cccccc" stroke-width="1.3" fill="none"/></svg>
<div style="position:absolute;left:607.87px;top:767.25px;width:68.33999999999999px;height:20.25px;background:rgba(255,255,255,0.045);border-radius:3px;"></div>
<div style="position:absolute;left:699.0500000000001px;top:777.85px;width:2px;height:2px;background:#b8b8b8;border-radius:50%;"></div>
<div style="position:absolute;left:704.2500000000001px;top:777.85px;width:2px;height:2px;background:#b8b8b8;border-radius:50%;"></div>
<div style="position:absolute;left:709.45px;top:777.85px;width:2px;height:2px;background:#b8b8b8;border-radius:50%;"></div>
<div class="m" style="left:397.23px;top:768.11px"><span style="color:#569cd6">public</span><span style="color:#cccccc"> </span><span style="color:#569cd6">function</span><span style="color:#cccccc"> </span><span style="color:#dcdcaa">read</span><span style="color:#da70d6">()</span><span style="color:#969696">: mixed</span><span style="color:#cccccc"> </span><span style="color:#da70d6">{</span></div>
<div class="m" style="left:306.26px;top:791.86px;color:#6e7681">39</div>
<div style="position:absolute;left:358px;top:790.0px;width:1px;height:23.75px;background:#404040;"></div>
<div class="m" style="left:397.23px;top:791.86px"><span style="color:#da70d6">}</span></div>
<div class="m" style="left:306.26px;top:815.61px;color:#6e7681">40</div>
<div style="position:absolute;left:358px;top:813.75px;width:1px;height:23.75px;background:#404040;"></div>
<div class="m" style="left:397.23px;top:815.61px"></div>
<div class="m" style="left:306.26px;top:839.36px;color:#6e7681">41</div>
<div style="position:absolute;left:358px;top:837.5px;width:1px;height:23.75px;background:#404040;"></div>
<div class="m" style="left:397.23px;top:839.36px"><span style="color:#6a9955">// Read one Mahasiswa</span></div>
<div class="t" style="left:397.23px;top:863.25px;font-size:14.8px;line-height:19.24px;color:#999999;transform:scaleX(0.9898);transform-origin:0 0;">1 reference | 0 overrides</div>
<div class="m" style="left:306.26px;top:883.11px;color:#6e7681">42</div>
<div style="position:absolute;left:358px;top:881.25px;width:1px;height:23.75px;background:#404040;"></div>
<div style="position:absolute;left:358.75px;top:881.25px;width:1424.25px;height:23.75px;background:#212d3a;"></div>
<svg style="position:absolute;left:341px;top:886.95px" width="8" height="12.6" viewBox="0 0 8 12.6"><path d="M0.8 0.6 L7.2 6.3 L0.8 12.0" stroke="#cccccc" stroke-width="1.3" fill="none"/></svg>
<div style="position:absolute;left:636.73px;top:882.25px;width:68.33999999999999px;height:20.25px;background:rgba(255,255,255,0.045);border-radius:3px;"></div>
<div style="position:absolute;left:727.91px;top:892.85px;width:2px;height:2px;background:#b8b8b8;border-radius:50%;"></div>
<div style="position:absolute;left:733.11px;top:892.85px;width:2px;height:2px;background:#b8b8b8;border-radius:50%;"></div>
<div style="position:absolute;left:738.31px;top:892.85px;width:2px;height:2px;background:#b8b8b8;border-radius:50%;"></div>
<div class="m" style="left:397.23px;top:883.11px"><span style="color:#569cd6">public</span><span style="color:#cccccc"> </span><span style="color:#569cd6">function</span><span style="color:#cccccc"> </span><span style="color:#dcdcaa">readOne</span><span style="color:#da70d6">()</span><span style="color:#969696">: mixed</span><span style="color:#cccccc"> </span><span style="color:#da70d6">{</span></div>
<div class="m" style="left:306.26px;top:906.86px;color:#6e7681">50</div>
<div style="position:absolute;left:358px;top:905.0px;width:1px;height:23.75px;background:#404040;"></div>
<div class="m" style="left:397.23px;top:906.86px"><span style="color:#da70d6">}</span></div>
<div class="m" style="left:306.26px;top:930.61px;color:#6e7681">51</div>
<div style="position:absolute;left:358px;top:928.75px;width:1px;height:23.75px;background:#404040;"></div>
<div class="m" style="left:397.23px;top:930.61px"></div>
<div class="m" style="left:306.26px;top:954.36px;color:#6e7681">52</div>
<div style="position:absolute;left:358px;top:952.5px;width:1px;height:23.75px;background:#404040;"></div>
<div class="m" style="left:397.23px;top:954.36px"><span style="color:#6a9955">// Update Mahasiswa</span></div>
<div class="t" style="left:397.23px;top:978.25px;font-size:14.8px;line-height:19.24px;color:#999999;transform:scaleX(0.9898);transform-origin:0 0;">1 reference | 0 overrides</div>
<div class="m" style="left:306.26px;top:998.11px;color:#6e7681">53</div>
<div style="position:absolute;left:358px;top:996.25px;width:1px;height:23.75px;background:#404040;"></div>
<div style="position:absolute;left:358.75px;top:996.25px;width:1424.25px;height:23.75px;background:#212d3a;"></div>
<svg style="position:absolute;left:341px;top:1001.95px" width="8" height="12.6" viewBox="0 0 8 12.6"><path d="M0.8 0.6 L7.2 6.3 L0.8 12.0" stroke="#cccccc" stroke-width="1.3" fill="none"/></svg>
<div style="position:absolute;left:627.1099999999999px;top:997.25px;width:58.72px;height:20.25px;background:rgba(255,255,255,0.045);border-radius:3px;"></div>
<div style="position:absolute;left:708.67px;top:1007.85px;width:2px;height:2px;background:#b8b8b8;border-radius:50%;"></div>
<div style="position:absolute;left:713.87px;top:1007.85px;width:2px;height:2px;background:#b8b8b8;border-radius:50%;"></div>
<div style="position:absolute;left:719.0699999999999px;top:1007.85px;width:2px;height:2px;background:#b8b8b8;border-radius:50%;"></div>
<div class="m" style="left:397.23px;top:998.11px"><span style="color:#569cd6">public</span><span style="color:#cccccc"> </span><span style="color:#569cd6">function</span><span style="color:#cccccc"> </span><span style="color:#dcdcaa">update</span><span style="color:#da70d6">()</span><span style="color:#969696">: bool</span><span style="color:#cccccc"> </span><span style="color:#da70d6">{</span></div>
<div class="m" style="left:306.26px;top:1021.86px;color:#6e7681">70</div>
<div style="position:absolute;left:358px;top:1020.0px;width:1px;height:23.75px;background:#404040;"></div>
<div class="m" style="left:397.23px;top:1021.86px"><span style="color:#da70d6">}</span></div>
<div class="m" style="left:306.26px;top:1045.61px;color:#6e7681">71</div>
<div style="position:absolute;left:358px;top:1043.75px;width:1px;height:23.75px;background:#404040;"></div>
<div class="m" style="left:397.23px;top:1045.61px"></div>
<div style="position:absolute;left:1791px;top:115.3px;width:5.0px;height:1.5px;background:#569cd6;opacity:0.48;"></div>
<div style="position:absolute;left:1791px;top:117.3px;width:5.0px;height:1.5px;background:#569cd6;opacity:0.48;"></div>
<div style="position:absolute;left:1797px;top:117.3px;width:9.0px;height:1.5px;background:#4ec9b0;opacity:0.48;"></div>
<div style="position:absolute;left:1807px;top:117.3px;width:1.0px;height:1.5px;background:#ffd700;opacity:0.48;"></div>
<div style="position:absolute;left:1795px;top:119.3px;width:7.0px;height:1.5px;background:#569cd6;opacity:0.48;"></div>
<div style="position:absolute;left:1803px;top:119.3px;width:5.0px;height:1.5px;background:#9cdcfe;opacity:0.48;"></div>
<div style="position:absolute;left:1808px;top:119.3px;width:1.0px;height:1.5px;background:#cccccc;opacity:0.48;"></div>
<div style="position:absolute;left:1795px;top:121.3px;width:7.0px;height:1.5px;background:#569cd6;opacity:0.48;"></div>
<div style="position:absolute;left:1803px;top:121.3px;width:11.0px;height:1.5px;background:#9cdcfe;opacity:0.48;"></div>
<div style="position:absolute;left:1815px;top:121.3px;width:1.0px;height:1.5px;background:#cccccc;opacity:0.48;"></div>
<div style="position:absolute;left:1817px;top:121.3px;width:11.0px;height:1.5px;background:#ce9178;opacity:0.48;"></div>
<div style="position:absolute;left:1828px;top:121.3px;width:1.0px;height:1.5px;background:#cccccc;opacity:0.48;"></div>
<div style="position:absolute;left:1830px;top:121.3px;width:2.0px;height:1.5px;background:#6a9955;opacity:0.48;"></div>
<div style="position:absolute;left:1833px;top:121.3px;width:8.0px;height:1.5px;background:#6a9955;opacity:0.48;"></div>
<div style="position:absolute;left:1842px;top:121.3px;width:4.0px;height:1.5px;background:#6a9955;opacity:0.48;"></div>
<div style="position:absolute;left:1847px;top:121.3px;width:5.0px;height:1.5px;background:#6a9955;opacity:0.48;"></div>
<div style="position:absolute;left:1853px;top:121.3px;width:4.0px;height:1.5px;background:#6a9955;opacity:0.48;"></div>
<div style="position:absolute;left:1858px;top:121.3px;width:2.0px;height:1.5px;background:#6a9955;opacity:0.48;"></div>
<div style="position:absolute;left:1861px;top:121.3px;width:11.0px;height:1.5px;background:#6a9955;opacity:0.48;"></div>
<div style="position:absolute;left:1795px;top:125.3px;width:6.0px;height:1.5px;background:#569cd6;opacity:0.48;"></div>
<div style="position:absolute;left:1802px;top:125.3px;width:3.0px;height:1.5px;background:#9cdcfe;opacity:0.48;"></div>
<div style="position:absolute;left:1805px;top:125.3px;width:1.0px;height:1.5px;background:#cccccc;opacity:0.48;"></div>
<div style="position:absolute;left:1795px;top:127.3px;width:6.0px;height:1.5px;background:#569cd6;opacity:0.48;"></div>
<div style="position:absolute;left:1802px;top:127.3px;width:4.0px;height:1.5px;background:#9cdcfe;opacity:0.48;"></div>
<div style="position:absolute;left:1806px;top:127.3px;width:1.0px;height:1.5px;background:#cccccc;opacity:0.48;"></div>
<div style="position:absolute;left:1795px;top:129.3px;width:6.0px;height:1.5px;background:#569cd6;opacity:0.48;"></div>
<div style="position:absolute;left:1802px;top:129.3px;width:5.0px;height:1.5px;background:#9cdcfe;opacity:0.48;"></div>
<div style="position:absolute;left:1807px;top:129.3px;width:1.0px;height:1.5px;background:#cccccc;opacity:0.48;"></div>
<div style="position:absolute;left:1795px;top:131.3px;width:6.0px;height:1.5px;background:#569cd6;opacity:0.48;"></div>
<div style="position:absolute;left:1802px;top:131.3px;width:8.0px;height:1.5px;background:#9cdcfe;opacity:0.48;"></div>
<div style="position:absolute;left:1810px;top:131.3px;width:1.0px;height:1.5px;background:#cccccc;opacity:0.48;"></div>
<div style="position:absolute;left:1795px;top:135.3px;width:6.0px;height:1.5px;background:#569cd6;opacity:0.48;"></div>
<div style="position:absolute;left:1802px;top:135.3px;width:8.0px;height:1.5px;background:#569cd6;opacity:0.48;"></div>
<div style="position:absolute;left:1811px;top:135.3px;width:11.0px;height:1.5px;background:#dcdcaa;opacity:0.48;"></div>
<div style="position:absolute;left:1822px;top:135.3px;width:1.0px;height:1.5px;background:#da70d6;opacity:0.48;"></div>
<div style="position:absolute;left:1823px;top:135.3px;width:3.0px;height:1.5px;background:#9cdcfe;opacity:0.48;"></div>
<div style="position:absolute;left:1826px;top:135.3px;width:1.0px;height:1.5px;background:#da70d6;opacity:0.48;"></div>
<div style="position:absolute;left:1828px;top:135.3px;width:1.0px;height:1.5px;background:#da70d6;opacity:0.48;"></div>
<div style="position:absolute;left:1799px;top:137.3px;width:5.0px;height:1.5px;background:#569cd6;opacity:0.48;"></div>
<div style="position:absolute;left:1804px;top:137.3px;width:2.0px;height:1.5px;background:#cccccc;opacity:0.48;"></div>
<div style="position:absolute;left:1806px;top:137.3px;width:4.0px;height:1.5px;background:#9cdcfe;opacity:0.48;"></div>
<div style="position:absolute;left:1811px;top:137.3px;width:1.0px;height:1.5px;background:#cccccc;opacity:0.48;"></div>
<div style="position:absolute;left:1813px;top:137.3px;width:3.0px;height:1.5px;background:#9cdcfe;opacity:0.48;"></div>
<div style="position:absolute;left:1816px;top:137.3px;width:1.0px;height:1.5px;background:#cccccc;opacity:0.48;"></div>
<div style="position:absolute;left:1795px;top:139.3px;width:1.0px;height:1.5px;background:#da70d6;opacity:0.48;"></div>
<div style="position:absolute;left:1795px;top:143.3px;width:2.0px;height:1.5px;background:#6a9955;opacity:0.48;"></div>
<div style="position:absolute;left:1798px;top:143.3px;width:6.0px;height:1.5px;background:#6a9955;opacity:0.48;"></div>
<div style="position:absolute;left:1805px;top:143.3px;width:9.0px;height:1.5px;background:#6a9955;opacity:0.48;"></div>
<div style="position:absolute;left:1791px;top:145px;width:112px;height:2px;background:rgba(38,79,120,0.32);"></div>
<div style="position:absolute;left:1795px;top:145.3px;width:6.0px;height:1.5px;background:#569cd6;opacity:0.48;"></div>
<div style="position:absolute;left:1802px;top:145.3px;width:8.0px;height:1.5px;background:#569cd6;opacity:0.48;"></div>
<div style="position:absolute;left:1811px;top:145.3px;width:6.0px;height:1.5px;background:#dcdcaa;opacity:0.48;"></div>
<div style="position:absolute;left:1817px;top:145.3px;width:2.0px;height:1.5px;background:#da70d6;opacity:0.48;"></div>
<div style="position:absolute;left:1819px;top:145.3px;width:1.0px;height:1.5px;background:#b0b0b0;opacity:0.48;"></div>
<div style="position:absolute;left:1821px;top:145.3px;width:4.0px;height:1.5px;background:#b0b0b0;opacity:0.48;"></div>
<div style="position:absolute;left:1826px;top:145.3px;width:1.0px;height:1.5px;background:#da70d6;opacity:0.48;"></div>
<div style="position:absolute;left:1795px;top:147.3px;width:1.0px;height:1.5px;background:#da70d6;opacity:0.48;"></div>
<div style="position:absolute;left:1795px;top:151.3px;width:2.0px;height:1.5px;background:#6a9955;opacity:0.48;"></div>
<div style="position:absolute;left:1798px;top:151.3px;width:4.0px;height:1.5px;background:#6a9955;opacity:0.48;"></div>
<div style="position:absolute;left:1803px;top:151.3px;width:3.0px;height:1.5px;background:#6a9955;opacity:0.48;"></div>
<div style="position:absolute;left:1807px;top:151.3px;width:9.0px;height:1.5px;background:#6a9955;opacity:0.48;"></div>
<div style="position:absolute;left:1791px;top:153px;width:112px;height:2px;background:rgba(38,79,120,0.32);"></div>
<div style="position:absolute;left:1795px;top:153.3px;width:6.0px;height:1.5px;background:#569cd6;opacity:0.48;"></div>
<div style="position:absolute;left:1802px;top:153.3px;width:8.0px;height:1.5px;background:#569cd6;opacity:0.48;"></div>
<div style="position:absolute;left:1811px;top:153.3px;width:4.0px;height:1.5px;background:#dcdcaa;opacity:0.48;"></div>
<div style="position:absolute;left:1815px;top:153.3px;width:2.0px;height:1.5px;background:#da70d6;opacity:0.48;"></div>
<div style="position:absolute;left:1817px;top:153.3px;width:1.0px;height:1.5px;background:#b0b0b0;opacity:0.48;"></div>
<div style="position:absolute;left:1819px;top:153.3px;width:5.0px;height:1.5px;background:#b0b0b0;opacity:0.48;"></div>
<div style="position:absolute;left:1825px;top:153.3px;width:1.0px;height:1.5px;background:#da70d6;opacity:0.48;"></div>
<div style="position:absolute;left:1795px;top:155.3px;width:1.0px;height:1.5px;background:#da70d6;opacity:0.48;"></div>
<div style="position:absolute;left:1795px;top:159.3px;width:2.0px;height:1.5px;background:#6a9955;opacity:0.48;"></div>
<div style="position:absolute;left:1798px;top:159.3px;width:4.0px;height:1.5px;background:#6a9955;opacity:0.48;"></div>
<div style="position:absolute;left:1803px;top:159.3px;width:3.0px;height:1.5px;background:#6a9955;opacity:0.48;"></div>
<div style="position:absolute;left:1807px;top:159.3px;width:9.0px;height:1.5px;background:#6a9955;opacity:0.48;"></div>
<div style="position:absolute;left:1791px;top:161px;width:112px;height:2px;background:rgba(38,79,120,0.32);"></div>
<div style="position:absolute;left:1795px;top:161.3px;width:6.0px;height:1.5px;background:#569cd6;opacity:0.48;"></div>
<div style="position:absolute;left:1802px;top:161.3px;width:8.0px;height:1.5px;background:#569cd6;opacity:0.48;"></div>
<div style="position:absolute;left:1811px;top:161.3px;width:7.0px;height:1.5px;background:#dcdcaa;opacity:0.48;"></div>
<div style="position:absolute;left:1818px;top:161.3px;width:2.0px;height:1.5px;background:#da70d6;opacity:0.48;"></div>
<div style="position:absolute;left:1820px;top:161.3px;width:1.0px;height:1.5px;background:#b0b0b0;opacity:0.48;"></div>
<div style="position:absolute;left:1822px;top:161.3px;width:5.0px;height:1.5px;background:#b0b0b0;opacity:0.48;"></div>
<div style="position:absolute;left:1828px;top:161.3px;width:1.0px;height:1.5px;background:#da70d6;opacity:0.48;"></div>
<div style="position:absolute;left:1795px;top:163.3px;width:1.0px;height:1.5px;background:#da70d6;opacity:0.48;"></div>
<div style="position:absolute;left:1795px;top:167.3px;width:2.0px;height:1.5px;background:#6a9955;opacity:0.48;"></div>
<div style="position:absolute;left:1798px;top:167.3px;width:6.0px;height:1.5px;background:#6a9955;opacity:0.48;"></div>
<div style="position:absolute;left:1805px;top:167.3px;width:9.0px;height:1.5px;background:#6a9955;opacity:0.48;"></div>
<div style="position:absolute;left:1791px;top:169px;width:112px;height:2px;background:rgba(38,79,120,0.32);"></div>
<div style="position:absolute;left:1795px;top:169.3px;width:6.0px;height:1.5px;background:#569cd6;opacity:0.48;"></div>
<div style="position:absolute;left:1802px;top:169.3px;width:8.0px;height:1.5px;background:#569cd6;opacity:0.48;"></div>
<div style="position:absolute;left:1811px;top:169.3px;width:6.0px;height:1.5px;background:#dcdcaa;opacity:0.48;"></div>
<div style="position:absolute;left:1817px;top:169.3px;width:2.0px;height:1.5px;background:#da70d6;opacity:0.48;"></div>
<div style="position:absolute;left:1819px;top:169.3px;width:1.0px;height:1.5px;background:#b0b0b0;opacity:0.48;"></div>
<div style="position:absolute;left:1821px;top:169.3px;width:4.0px;height:1.5px;background:#b0b0b0;opacity:0.48;"></div>
<div style="position:absolute;left:1826px;top:169.3px;width:1.0px;height:1.5px;background:#da70d6;opacity:0.48;"></div>
<div style="position:absolute;left:1795px;top:171.3px;width:1.0px;height:1.5px;background:#da70d6;opacity:0.48;"></div>
<div style="position:absolute;left:1795px;top:175.3px;width:2.0px;height:1.5px;background:#6a9955;opacity:0.48;"></div>
<div style="position:absolute;left:1798px;top:175.3px;width:6.0px;height:1.5px;background:#6a9955;opacity:0.48;"></div>
<div style="position:absolute;left:1805px;top:175.3px;width:9.0px;height:1.5px;background:#6a9955;opacity:0.48;"></div>
<div style="position:absolute;left:1791px;top:177px;width:112px;height:2px;background:rgba(38,79,120,0.32);"></div>
<div style="position:absolute;left:1795px;top:177.3px;width:6.0px;height:1.5px;background:#569cd6;opacity:0.48;"></div>
<div style="position:absolute;left:1802px;top:177.3px;width:8.0px;height:1.5px;background:#569cd6;opacity:0.48;"></div>
<div style="position:absolute;left:1811px;top:177.3px;width:6.0px;height:1.5px;background:#dcdcaa;opacity:0.48;"></div>
<div style="position:absolute;left:1817px;top:177.3px;width:2.0px;height:1.5px;background:#da70d6;opacity:0.48;"></div>
<div style="position:absolute;left:1819px;top:177.3px;width:1.0px;height:1.5px;background:#b0b0b0;opacity:0.48;"></div>
<div style="position:absolute;left:1821px;top:177.3px;width:4.0px;height:1.5px;background:#b0b0b0;opacity:0.48;"></div>
<div style="position:absolute;left:1826px;top:177.3px;width:1.0px;height:1.5px;background:#da70d6;opacity:0.48;"></div>
<div style="position:absolute;left:1795px;top:179.3px;width:1.0px;height:1.5px;background:#da70d6;opacity:0.48;"></div>
<div style="position:absolute;left:1791px;top:181.3px;width:1.0px;height:1.5px;background:#ffd700;opacity:0.48;"></div>
<div style="position:absolute;left:1791px;top:183.3px;width:2.0px;height:1.5px;background:#569cd6;opacity:0.48;"></div>
<div style="position:absolute;left:1868px;top:87px;width:35px;height:964px;background:linear-gradient(to right, rgba(0,0,0,0), rgba(0,0,0,0.16));"></div>
<div style="position:absolute;left:1903px;top:87px;width:1px;height:964px;background:#141414;"></div>
<div style="position:absolute;left:1903.5px;top:115px;width:16.5px;height:435.5px;background:#3a3a3a;"></div>
<div style="position:absolute;left:1903.5px;top:612px;width:16.5px;height:2px;background:#a0a0a0;"></div>
<div style="position:absolute;left:1915px;top:75px;width:6px;height:382px;border-radius:5px 0 0 5px;background:#262b2a;border-left:1px solid #4a4a4a;box-sizing:border-box"></div>
<div style="position:absolute;left:1915px;top:75px;width:6px;height:39px;border-radius:5px 0 0 0;background:#2e2e2e;border-left:1px solid #4a4a4a;box-sizing:border-box"></div>
</div>
<div style="position:absolute;left:0px;top:1051.25px;width:1920px;height:1.25px;background:#2b2b2b;"></div>
<div style="position:absolute;left:0px;top:1052.5px;width:1920px;height:27.5px;background:#181818;"></div>
<div style="position:absolute;left:0px;top:1052.8px;width:43px;height:25.2px;background:#0078d4;"></div>
<svg style="position:absolute;left:0px;top:1040px" width="50" height="40" viewBox="0 0 50 40"><path d="M16 1061 L21.4 1065.8 L16 1070.6 M26.6 1056.3 L21.9 1061.2 L26.6 1065.9" transform="translate(0,-1040)" stroke="#ffffff" stroke-width="1.4" fill="none" stroke-linecap="round"/></svg>
<div style="position:absolute;left:0px;top:1078px;width:1920px;height:2px;background:#0b0b0b;"></div>
<svg style="position:absolute;left:53px;top:1056px" width="17" height="17" viewBox="0 0 17 17"><circle cx="8.3" cy="8.3" r="7.4" fill="none" stroke="#cccccc" stroke-width="1.2"/><path d="M5.3 5.3 L11.3 11.3 M11.3 5.3 L5.3 11.3" stroke="#cccccc" stroke-width="1.2"/></svg>
<div class="t" style="left:74.50px;top:1055.35px;font-size:15px;line-height:19.5px;color:#cccccc;">1</div>
<svg style="position:absolute;left:87px;top:1055px" width="17" height="17" viewBox="0 0 17 17"><path d="M8.5 1.2 L16 15.4 H1 Z" fill="none" stroke="#cccccc" stroke-width="1.2" stroke-linejoin="round"/><path d="M8.5 6 V11" stroke="#cccccc" stroke-width="1.2"/><circle cx="8.5" cy="13" r="0.7" fill="#cccccc"/></svg>
<div class="t" style="left:108.30px;top:1055.35px;font-size:15px;line-height:19.5px;color:#cccccc;transform:scaleX(0.9167);transform-origin:0 0;">0</div>
<div class="t" style="left:1295.40px;top:1055.45px;font-size:15px;line-height:19.5px;color:#cccccc;transform:scaleX(0.9412);transform-origin:0 0;">Ln 89, Col 3</div>
<div class="t" style="left:1392.30px;top:1055.45px;font-size:15px;line-height:19.5px;color:#cccccc;transform:scaleX(0.9004);transform-origin:0 0;">Spaces: 4</div>
<div class="t" style="left:1473.00px;top:1055.45px;font-size:15px;line-height:19.5px;color:#cccccc;transform:scaleX(0.9329);transform-origin:0 0;">UTF-8</div>
<div class="t" style="left:1532.00px;top:1055.45px;font-size:15px;line-height:19.5px;color:#cccccc;transform:scaleX(0.8429);transform-origin:0 0;">CRLF</div>
<div class="t" style="left:1584.70px;top:1055.45px;font-size:15px;line-height:19.5px;color:#cccccc;transform:scaleX(0.8835);transform-origin:0 0;">PHP</div>
<div class="t" style="left:1691.00px;top:1055.45px;font-size:15px;line-height:19.5px;color:#cccccc;transform:scaleX(0.9546);transform-origin:0 0;">Go Live</div>
<div class="t" style="left:1760.00px;top:1055.45px;font-size:15px;line-height:19.5px;color:#cccccc;transform:scaleX(0.9302);transform-origin:0 0;">8.2.12: 8.2</div>
<svg style="position:absolute;left:0;top:0;overflow:visible" width="1" height="1"><g transform="translate(1632,1056.2) scale(0.96)"><path d="M0.8 10.2 C0.3 7.6 1.8 6.2 3.6 6.2 H16.4 C18.2 6.2 19.7 7.6 19.2 10.2 C18.7 14.4 15.8 17.4 10 17.4 C4.2 17.4 1.3 14.4 0.8 10.2 Z" fill="#cccccc"/><rect x="4.2" y="8.2" width="11.6" height="5.6" rx="0.6" fill="#1c1c1c"/><rect x="7.4" y="9.2" width="1.6" height="3.6" fill="#cccccc"/><rect x="11" y="9.2" width="1.6" height="3.6" fill="#cccccc"/><circle cx="6.8" cy="4.6" r="3.4" fill="#1c1c1c" stroke="#cccccc" stroke-width="1.6"/><circle cx="13.2" cy="4.6" r="3.4" fill="#1c1c1c" stroke="#cccccc" stroke-width="1.6"/></g></svg>
<svg style="position:absolute;left:0;top:0" width="1920" height="1080"><g fill="none" stroke="#cccccc" stroke-width="1.3"><path d="M1676.17 1065.43 A4 4 0 1 1 1681.83 1065.43"/><path d="M1674.05 1067.55 A7 7 0 1 1 1683.95 1067.55"/></g><circle cx="1679" cy="1062.6" r="1.7" fill="#cccccc"/><path d="M1679 1063.5 V1071.6" stroke="#cccccc" stroke-width="2"/><g fill="none" stroke="#cccccc" stroke-width="1.3"><circle cx="1858.5" cy="1060.8" r="4.4"/><path d="M1855.4 1064 L1848.4 1071 M1850.2 1069.2 L1852 1071 M1852 1067.4 L1853.4 1068.8"/></g><circle cx="1859.6" cy="1059.7" r="1" fill="#cccccc"/></svg>
<svg style="position:absolute;left:0;top:0" width="1920" height="1080"><g fill="none" stroke="#cccccc" stroke-width="1.3" stroke-linejoin="round"><path d="M1887.2 1069.6 V1062.4 C1887.2 1058.8 1889.8 1056.6 1892.8 1056.6 C1895.8 1056.6 1898.4 1058.8 1898.4 1062.4 V1069.6 L1899.8 1070.6 H1885.8 Z"/><path d="M1891.2 1072.4 H1894.4"/></g></svg>
</body></html>
